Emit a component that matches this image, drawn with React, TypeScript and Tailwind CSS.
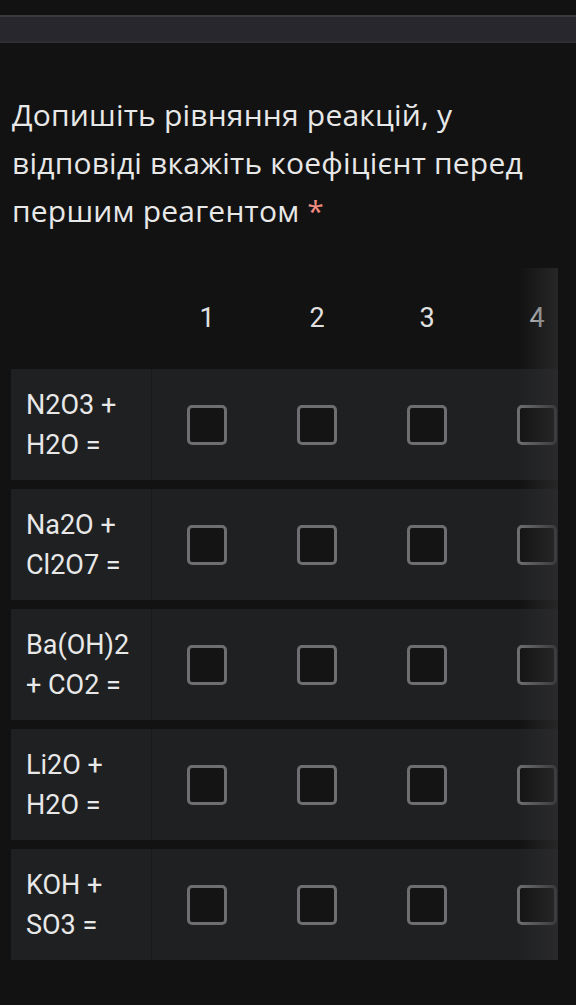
import React from 'react';

const rows = [
    ['N2O3 +', 'H2O ='],
    ['Na2O +', 'Cl2O7 ='],
    ['Ba(OH)2', '+ CO2 ='],
    ['Li2O +', 'H2O ='],
    ['KOH +', 'SO3 ='],
];

const cols = ['1', '2', '3', '4'];

function Box() {
    return <div className="w-[40px] h-[40px] rounded-[5px] border-[3px] border-[#6e6e70] bg-[#141414]" />;
}

export default function App() {
    return (
        <div className="min-h-screen bg-[#121212] font-['Roboto',sans-serif] text-[#e8e8e8]">
            {/* top card strip */}
            <div className="pt-[15px]">
                <div className="h-[28px] bg-[#28272d] border-t-2 border-t-[#3b3b3f] border-b-2 border-b-[#2f2f33]" />
            </div>

            {/* question */}
            <div className="px-[12px] pt-[48px] font-['Open_Sans',sans-serif] text-[30px] leading-[48px] tracking-[0.2px] whitespace-nowrap">
                Допишіть рівняння реакцій, у
                <br />
                відповіді вкажіть коефіцієнт перед
                <br />
                першим реагентом <span className="text-[#f28b82]">*</span>
            </div>

            {/* grid */}
            <div className="relative mt-[33px] ml-[11px] w-[547px] overflow-hidden">
                <div className="flex h-[101px] items-center">
                    <div className="w-[141px] shrink-0" />
                    {cols.map((c) => (
                        <div key={c} className="w-[110px] shrink-0 text-center text-[27px] text-[#e0e0e0]">
                            {c}
                        </div>
                    ))}
                </div>
                <div className="flex flex-col gap-[9px]">
                    {rows.map((r, i) => (
                        <div key={i} className="flex h-[111px] bg-[#1f2022]">
                            <div className="w-[141px] shrink-0 flex flex-col justify-center pl-[15px] text-[27px] leading-[40px] border-r border-r-[#1a1a1c]">
                                <span>{r[0]}</span>
                                <span>{r[1]}</span>
                            </div>
                            {cols.map((c) => (
                                <div key={c} className="w-[110px] shrink-0 flex items-center justify-center">
                                    <Box />
                                </div>
                            ))}
                        </div>
                    ))}
                </div>
                {/* scroll fade */}
                <div className="absolute right-0 top-[-4px] bottom-0 w-[40px] bg-gradient-to-r from-transparent to-[#2c2c2e]/80" />
            </div>
        </div>
    );
}
